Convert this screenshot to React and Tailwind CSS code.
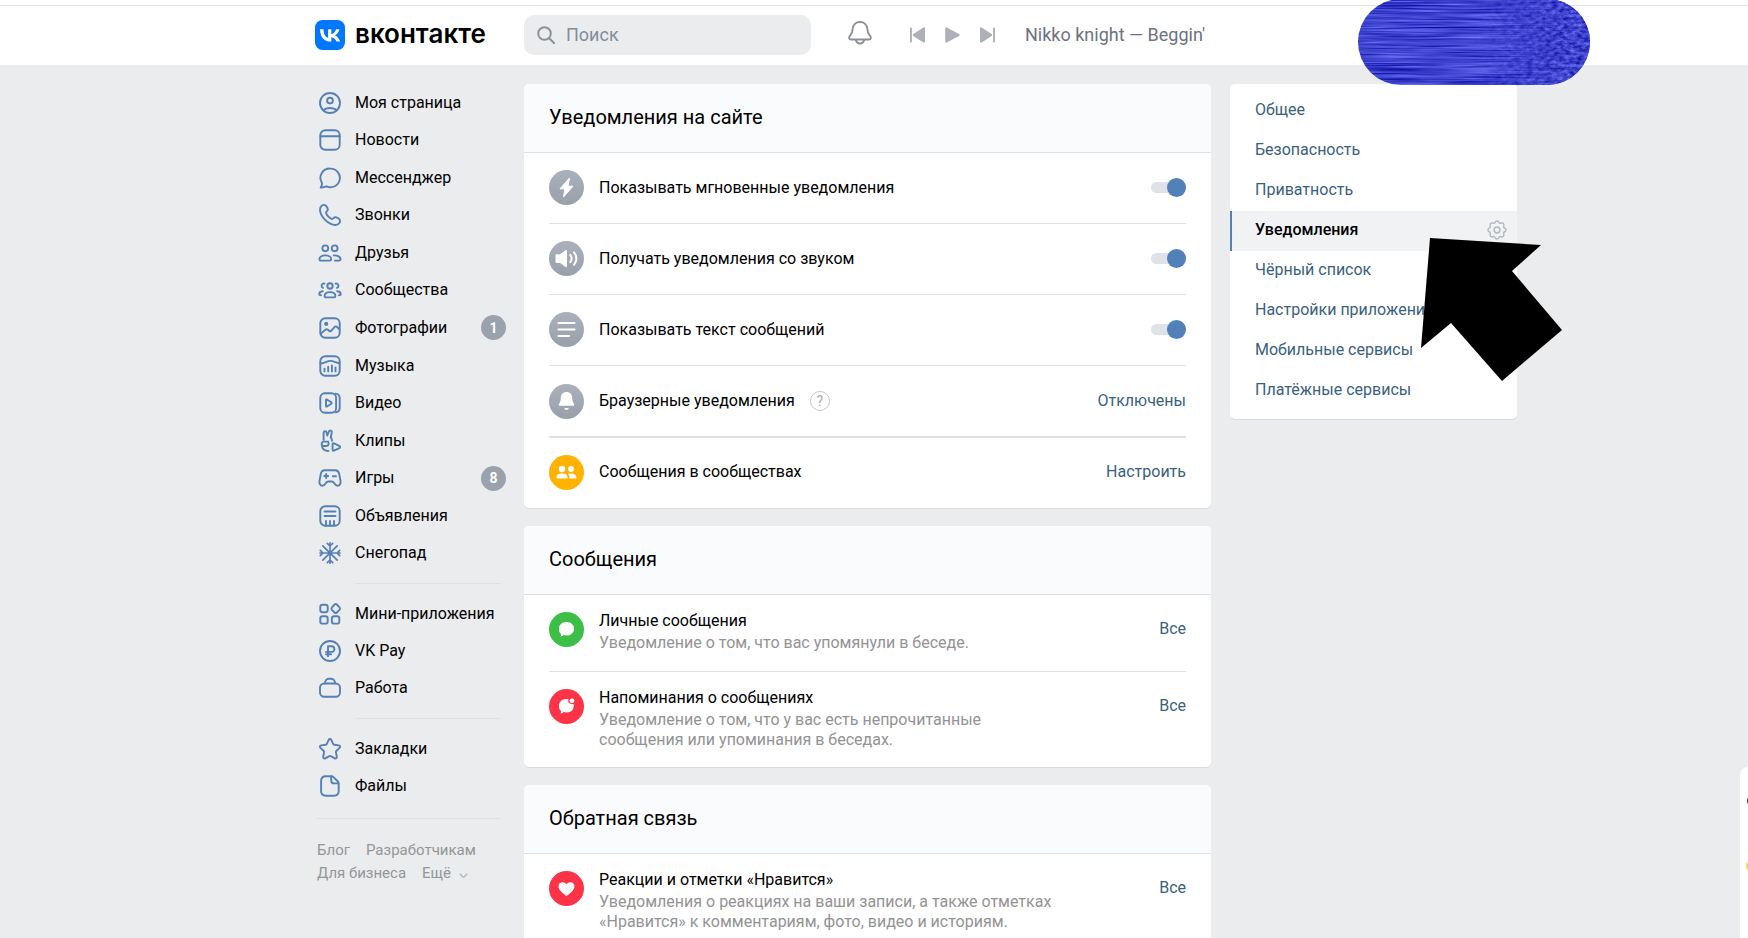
import { useState } from 'react';

const icons = {
  profile: (
    <>
      <circle cx="12" cy="12" r="10" />
      <circle cx="12" cy="9.6" r="2.9" />
      <path d="M5.5 19.4c1.4-1.6 3.7-2.4 6.5-2.4s5.1.8 6.5 2.4" />
    </>
  ),
  news: (
    <>
      <rect x="2.3" y="2.3" width="19.4" height="19.4" rx="5" />
      <path d="M2.5 8.3h19" />
    </>
  ),
  messenger: (
    <path d="M12.5 2.6a9.3 9.3 0 1 1-3.9 17.7c-1.7 1-3.7 1.3-6 1.2 1.2-1.4 1.7-3 1.2-4.8A9.3 9.3 0 0 1 12.5 2.6Z" />
  ),
  calls: (
    <path d="M7 2.1C5 1.3 2 3.2 2 6.6 2 13.6 10.5 22 17.5 22c3.2 0 5.3-3 4.3-5.1-.6-1.2-3-2.7-4.5-2.7-1.6 0-1.9 1.8-3.2 1.8C12.3 16 8 11.7 8 9.8c0-1.3 1.8-1.6 1.8-3.2C9.8 5.1 8.4 2.6 7 2.1Z" />
  ),
  friends: (
    <>
      <circle cx="7.3" cy="7.3" r="2.9" />
      <circle cx="16.7" cy="7.3" r="2.9" />
      <path d="M1.4 18.1c0-2.1 2.4-3.7 5.9-3.7s5.9 1.6 5.9 3.7c0 1-.6 1.5-1.6 1.5H3c-1 0-1.6-.5-1.6-1.5Z" />
      <path d="M15.7 14.4c3.9-.2 6.9 1.4 6.9 3.7 0 1-.6 1.5-1.6 1.5h-4.2" />
    </>
  ),
  groups: (
    <>
      <circle cx="12" cy="8" r="2.7" />
      <path d="M6.6 18c0-2.3 2.2-3.9 5.4-3.9s5.4 1.6 5.4 3.9c0 .9-.5 1.4-1.4 1.4H8c-.9 0-1.4-.5-1.4-1.4Z" />
      <path d="M6.5 5.6c-1.5-.4-3 .6-3 2.2 0 1 .5 1.8 1.5 2.1M17.5 5.6c1.5-.4 3 .6 3 2.2 0 1-.5 1.8-1.5 2.1M4.8 13.2c-2.2.2-3.5 1.3-3.5 2.7 0 .8.4 1.3 1.7 1.3M19.2 13.2c2.2.2 3.5 1.3 3.5 2.7 0 .8-.4 1.3-1.7 1.3" />
    </>
  ),
  photos: (
    <>
      <rect x="2.3" y="2.3" width="19.4" height="19.4" rx="5" />
      <path d="m2.8 17.6 4.6-3.9c.9-.7 1.7-.7 2.5 0l1.5 1.3c.6.5 1.2.4 1.7-.2l3.4-3.7c.8-.9 1.8-.9 2.6-.1l2.3 2.2" />
      <circle cx="8.2" cy="7.9" r="1.1" fill="currentColor" />
    </>
  ),
  music: (
    <>
      <rect x="2.3" y="2.3" width="19.4" height="19.4" rx="5" />
      <path d="M2.5 9.5c4 .3 6.2-2.6 10-2.6 3.4 0 5.2 1.8 9 2.4M6.5 14.8v2.6M10.2 12.8v4.6M13.9 11.4v6M17.5 13.4v4" />
    </>
  ),
  video: (
    <>
      <rect x="2.3" y="2.3" width="15.8" height="19.4" rx="4.5" />
      <path d="M8 9v6c0 .6.5.8 1 .5l4.3-2.8c.5-.4.5-1 0-1.4L9 8.5c-.5-.3-1-.1-1 .5ZM17.6 2.6c2.5.3 4.1 1.9 4.1 4.4v10c0 2.5-1.6 4.1-4.1 4.4" />
    </>
  ),
  clips: (
    <>
      <path d="M5.6 10.8V3.900c0-2 2.700-2.300 3-.4l.6 3.100 1.700-4c.8-1.800 3.400-1 2.900.9l-1.100 5M13.200 8.500l.8 3.200M10 12.600H6.100c-3 0-3.300 4.200-.5 4.400h2.700c2.200 0 3-2.400 1.700-4.400M4 17.300c.6 3 2.800 4.700 6.400 4.700" />
      <path d="M14.6 15.2v5.6c0 .8.7 1.1 1.3.8l5.5-2.4c.9-.4 1-1.6.2-2.1l-5.5-2.8c-.8-.4-1.5.1-1.500.900Z" />
    </>
  ),
  games: (
    <>
      <path d="M6.8 4.3h10.4c2.3 0 3.5 1.4 4 3.6l1.3 6.8c.5 3-.8 5-2.8 5-1.6 0-2.6-1-3.6-2.7-.7-1.1-1.4-1.5-2.5-1.5h-3.2c-1.1 0-1.8.4-2.5 1.5-1 1.7-2 2.7-3.6 2.7-2 0-3.3-2-2.8-5l1.3-6.8c.5-2.2 1.7-3.6 4-3.6Z" />
      <path d="M6.2 10h4M8.2 8v4M14.8 10.2h3.2" />
    </>
  ),
  ads: (
    <>
      <rect x="2.3" y="2.3" width="19.4" height="19.4" rx="5" />
      <path d="M6.500 7.500h11M6.500 12h11M8 17v4.500M12 17v4.500M16 17v4.500" />
    </>
  ),
  snow: (
    <path
      strokeWidth="1.7"
      d="M12 1.800v20.400M2 12h20M4.800 4.800l14.400 14.400M19.200 4.800 4.800 19.200M9.300 2.300 12 5l2.700-2.700M9.300 21.700 12 19l2.700 2.700M2.300 9.300 5 12l-2.700 2.700M21.700 9.300 19 12l2.700 2.700"
    />
  ),
  apps: (
    <>
      <rect x="2.3" y="2.8" width="7.4" height="7.4" rx="2.2" />
      <rect x="2.3" y="14.2" width="7.4" height="7.4" rx="2.2" />
      <rect x="13.9" y="14.2" width="7.4" height="7.4" rx="2.2" />
      <path d="m16.6 2.5-2.7 2.8c-.7.8-.7 1.7 0 2.5l2.7 2.7c.7.7 1.5.7 2.2 0l2.7-2.7c.7-.8.7-1.7 0-2.5l-2.7-2.8c-.7-.7-1.5-.7-2.2 0Z" />
    </>
  ),
  pay: (
    <>
      <circle cx="12" cy="12" r="10" />
      <path d="M10 17.2V7.3h3.5c3.8 0 3.8 5.6 0 5.6H8M8 15.3h5.2" />
    </>
  ),
  work: (
    <>
      <rect x="2" y="7.5" width="20" height="13.3" rx="4.2" />
      <path d="M7 7.3c0-2.5 1.6-4.6 3.6-4.6h2.8c2 0 3.6 2.1 3.6 4.6" />
    </>
  ),
  bookmarks: (
    <path d="M10.7 2.9c.6-1.2 2-1.2 2.6 0l2 4.2c.2.4.5.6.9.7l4.6.6c1.4.2 1.8 1.6.8 2.5l-3.3 3.1c-.3.3-.4.7-.4 1.1l.9 4.7c.2 1.3-.9 2.1-2.1 1.5l-4-2.2c-.5-.3-.9-.3-1.4 0l-4 2.2c-1.2.6-2.3-.2-2.1-1.5l.9-4.7c0-.4-.1-.8-.4-1.1l-3.3-3.1c-1-.9-.6-2.3.8-2.5l4.6-.6c.4-.1.7-.3.9-.7l2-4.2Z" />
  ),
  files: (
    <>
      <path d="M7.8 2.3h5.7c.8 0 1.4.2 2 .8l4.4 4.4c.5.5.8 1.2.8 1.9V17c0 3-1.7 4.7-4.7 4.7H7.8c-3 0-4.7-1.7-4.7-4.7V7c0-3 1.7-4.7 4.7-4.7Z" />
      <path d="M13.2 2.6v3.8c0 2 .9 3 3 3h4.2" />
    </>
  ),
};

const menuGroups = [
  {
    height: 'h-[488px]',
    items: [
      { icon: 'profile', label: 'Моя страница' },
      { icon: 'news', label: 'Новости' },
      { icon: 'messenger', label: 'Мессенджер' },
      { icon: 'calls', label: 'Звонки' },
      { icon: 'friends', label: 'Друзья' },
      { icon: 'groups', label: 'Сообщества' },
      { icon: 'photos', label: 'Фотографии', count: 1 },
      { icon: 'music', label: 'Музыка' },
      { icon: 'video', label: 'Видео' },
      { icon: 'clips', label: 'Клипы' },
      { icon: 'games', label: 'Игры', count: 8 },
      { icon: 'ads', label: 'Объявления' },
      { icon: 'snow', label: 'Снегопад' },
    ],
  },
  {
    height: 'h-[112px]',
    items: [
      { icon: 'apps', label: 'Мини-приложения' },
      { icon: 'pay', label: 'VK Pay' },
      { icon: 'work', label: 'Работа' },
    ],
  },
  {
    height: 'h-[75px]',
    items: [
      { icon: 'bookmarks', label: 'Закладки' },
      { icon: 'files', label: 'Файлы' },
    ],
  },
];

const settingsTabs = [
  'Общее',
  'Безопасность',
  'Приватность',
  'Уведомления',
  'Чёрный список',
  'Настройки приложений',
  'Мобильные сервисы',
  'Платёжные сервисы',
];

const gray = 'bg-linear-to-b from-[#aab1bc] to-[#99a0ac]';

const glyphs = {
  bolt: <path d="M20.5 8 11 18.8h5L14.5 27 24 16.2h-5L20.5 8Z" strokeLinejoin="round" stroke="white" />,
  sound: (
    <>
      <path d="M6.5 14.5c0-.8.4-1.2 1.2-1.2H11l5.5-4c.7-.5 1.5-.2 1.5.8v15c0 1-.8 1.3-1.5.8l-5.5-4H7.7c-.8 0-1.2-.4-1.2-1.2v-6.200Z" />
      <path d="M21.3 14c1.6 2.2 1.6 5 0 7.2M25 11.3c2.9 3.8 2.9 8.7 0 12.5" fill="none" stroke="white" strokeWidth="2" strokeLinecap="round" />
    </>
  ),
  text: <path d="M9.5 11h16M9.5 17.5h16M9.5 24h10.5" fill="none" stroke="white" strokeWidth="2.2" strokeLinecap="round" />,
  bell: (
    <>
      <path d="M17.5 8c-3.7 0-5.5 2.6-5.7 5.7-.2 3-.4 4-1.5 5.5-1 1.4-.7 2.6.9 2.6h12.6c1.6 0 1.9-1.2.9-2.6-1.1-1.5-1.3-2.5-1.5-5.5C23 10.6 21.2 8 17.5 8Z" />
      <path d="M15.3 24h4.4c0 2.6-4.4 2.6-4.4 0Z" />
    </>
  ),
  people: (
    <>
      <circle cx="13" cy="14" r="3.2" />
      <circle cx="22" cy="14" r="2.9" />
      <path d="M7.5 22.4c0-2.5 2.3-4 5.5-4s5.5 1.5 5.5 4c0 .8-.4 1.2-1.1 1.2H8.6c-.7 0-1.1-.4-1.1-1.2ZM20.3 23.6c.5-2.1-.1-3.6-1.4-4.7 3.7-1.3 8.6.1 8.6 3.5 0 .8-.4 1.2-1.1 1.2h-6.1Z" />
    </>
  ),
  chat: <path d="M17.5 10c4.5 0 7.6 2.9 7.6 6.7s-3.1 6.8-7.6 6.8c-1 0-1.8-.1-2.6-.4-.9.9-2 1.4-3.4 1.5.5-.9.6-1.8.4-2.8a6.6 6.6 0 0 1-2-5.1c0-3.8 3.1-6.700 7.600-6.700Z" />,
  unread: (
    <>
      <path d="M17.5 10c.9 0 1.5.1 2 .3-1 2.8 1.1 5.4 4.9 4.8.3.5.4 1.1.4 1.8 0 3.7-3.1 6.6-7.3 6.6-1 0-1.8-.1-2.6-.4-.9.9-2 1.4-3.4 1.5.5-.9.6-1.8.4-2.8a6.6 6.6 0 0 1-2-5.1c0-3.8 3.1-6.700 7.600-6.700Z" />
      <circle cx="23" cy="11.8" r="2.4" />
    </>
  ),
  heart: <path d="M17.5 13.3c1.9-3.3 8-2.5 8 1.9 0 3.6-3.6 6.2-6.4 8.7-1.2 1-2 1-3.2 0-2.8-2.5-6.4-5.1-6.4-8.7 0-4.4 6.1-5.2 8-1.9Z" />,
};

function Round({ glyph, color }) {
  return (
    <span className={`block size-[35px] shrink-0 rounded-full ${color}`}>
      <svg viewBox="0 0 35 35" className="size-full" fill="white">{glyphs[glyph]}</svg>
    </span>
  );
}

function Card({ title, children }) {
  return (
    <section className="overflow-hidden rounded-[5px] bg-white shadow-[0_1px_0_0_#d9dce0]">
      <h2 className="flex h-[69px] items-center border-b border-[#dce1e6] bg-[#fafbfd] px-[25px] pb-0.5 text-xl">{title}</h2>
      <div className="px-[25px]">{children}</div>
    </section>
  );
}

function ToggleRow({ glyph, label }) {
  const [on, setOn] = useState(true);
  return (
    <label className="flex h-[71px] cursor-pointer items-center border-b border-[#dce1e6] pb-px">
      <Round glyph={glyph} color={gray} />
      <span className="ml-[15px] flex-1">{label}</span>
      <input
        type="checkbox"
        checked={on}
        onChange={(e) => setOn(e.target.checked)}
        className="relative h-[19px] w-[35px] cursor-pointer appearance-none before:absolute before:inset-x-0 before:top-1 before:h-[11px] before:rounded-full before:bg-[#dfe2e6] after:absolute after:top-0 after:left-0 after:size-[19px] after:rounded-full after:bg-[#a9b0ba] checked:after:left-4 checked:after:bg-[#5181b8]"
      />
    </label>
  );
}

function DetailRow({ glyph, color, title, text }) {
  return (
    <div className="flex border-b border-[#dce1e6] pt-[14px] pb-[18px] last:border-b-0 last:pb-[17px]">
      <div className="mt-[3px]">
        <Round glyph={glyph} color={color} />
      </div>
      <div className="ml-[15px] flex-1">
        <h3 className="leading-6">{title}</h3>
        <p className="max-w-[462px] leading-5 text-[#939393]">{text}</p>
      </div>
      <button type="button" className="mt-2 h-6 leading-6 text-[#3a5f80]">Все</button>
    </div>
  );
}

function Sidebar() {
  return (
    <nav className="w-[210px] shrink-0 pr-4">
      {menuGroups.map((group, i) => (
        <div key={i}>
          <ul className={`grid auto-rows-fr ${group.height}`}>
            {group.items.map((item) => (
              <li key={item.icon} className="flex">
                <a href="#" className="flex flex-1 items-center pl-1">
                  <svg
                    viewBox="0 0 24 24"
                    className="size-6 text-[#5580b5]"
                    fill="none"
                    stroke="currentColor"
                    strokeWidth="1.9"
                    strokeLinecap="round"
                    strokeLinejoin="round"
                  >
                    {icons[item.icon]}
                  </svg>
                  <span className="ml-[13px] whitespace-nowrap">{item.label}</span>
                </a>
                {item.count && (
                  <span className="mr-[2px] flex size-[25px] shrink-0 items-center justify-center self-center rounded-full bg-[#99a2ad] text-sm font-bold text-white">
                    {item.count}
                  </span>
                )}
              </li>
            ))}
          </ul>
          {i < 2 && <hr className="my-[11px] mr-[7px] ml-[41px] border-[#dfe1e4]" />}
        </div>
      ))}
      <hr className="mt-[13px] mr-[7px] ml-[2px] border-[#dfe1e4]" />
      <div className="mt-5 ml-[3px] flex flex-wrap gap-x-4 text-[15px] leading-[23px] text-[#939699]">
        <a href="#">Блог</a>
        <a href="#">Разработчикам</a>
        <a href="#">Для бизнеса</a>
        <button type="button" className="flex items-center gap-2">
          Ещё
          <svg viewBox="0 0 10 6" className="mt-1 w-[9px]" fill="none" stroke="#b8bdc4" strokeWidth="1.8">
            <path d="m1 1 4 4 4-4" />
          </svg>
        </button>
      </div>
    </nav>
  );
}

function Header() {
  return (
    <header className="h-[65px] bg-white pt-[5px] pl-[83px]">
      <div className="-ml-[83px] border-t border-[#e3e4e6]" />
      <div className="relative mx-auto flex h-[59px] max-w-[1203px] items-center pb-0.5">
        <a href="#" className="flex w-[210px] shrink-0 items-center gap-[10px] pl-px">
          <svg viewBox="0 0 24 24" className="size-[30px]">
            <rect width="24" height="24" rx="6" fill="#0077ff" />
            <path fill="white" d="M6.79 7.3H4.05c.13 6.24 3.25 9.99 8.72 9.99h.31v-3.57c2.01.2 3.53 1.67 4.14 3.57h2.84c-.78-2.84-2.83-4.41-4.11-5.01 1.28-.74 3.08-2.54 3.51-4.98h-2.58c-.56 1.98-2.22 3.78-3.8 3.95V7.3H10.5v6.92c-1.6-.4-3.62-2.34-3.71-6.92Z" />
          </svg>
          <span className="pb-0.5 font-['Inter',sans-serif] text-[26px] leading-8 font-semibold">вконтакте</span>
        </a>
        <label className="flex h-10 w-[287px] shrink-0 items-center rounded-[10px] bg-[#ebecee] pl-[13px]">
          <svg viewBox="0 0 18 18" className="size-[18px]" fill="none" stroke="#8b929b" strokeWidth="2" strokeLinecap="round">
            <circle cx="7.5" cy="7.5" r="6.3" />
            <path d="m12.2 12.2 5 5" />
          </svg>
          <input
            type="search"
            placeholder="Поиск"
            aria-label="Поиск"
            className="ml-[11px] w-52 bg-transparent text-lg outline-none placeholder:text-[#818c99]"
          />
        </label>
        <button type="button" aria-label="Уведомления" className="ml-9 pb-1">
          <svg viewBox="0 0 26 26" className="size-[26px]" fill="none" stroke="#8b9095" strokeWidth="1.9" strokeLinejoin="round">
            <path d="M13 2c-4.2 0-7 2.8-7.3 6.7-.2 3.1-.5 4.7-2.3 6.5-1.9 1.9-1.7 4.3.8 4.3h17.6c2.5 0 2.7-2.4.8-4.3-1.8-1.8-2.1-3.4-2.3-6.5C20 4.800 17.200 2 13 2Z" />
            <path d="M8.8 19.5c.5 2.7 2 4 4.2 4s3.7-1.3 4.2-4" />
          </svg>
        </button>
        <div className="ml-[37px] flex gap-5">
          <button type="button" aria-label="Предыдущий">
            <svg viewBox="0 0 15 16" className="h-4 w-[15px]" fill="#acb1b9">
              <path d="M0 1.3c0-1.1 1.9-1.1 1.9 0v13.4c0 1.1-1.9 1.1-1.9 0V1.3ZM13.4.5c.8-.5 1.6-.1 1.6.9v13.2c0 1-.8 1.4-1.6.9L3.3 8.9c-.7-.5-.7-1.3 0-1.8L13.4.5Z" />
            </svg>
          </button>
          <button type="button" aria-label="Играть">
            <svg viewBox="0 0 15 16" className="h-4 w-[15px]" fill="#acb1b9">
              <path d="M1.8.5C.9 0 .2.4.2 1.4v13.2c0 1 .7 1.4 1.6.9L14 8.9c.8-.5.8-1.3 0-1.8L1.8.5Z" />
            </svg>
          </button>
          <button type="button" aria-label="Следующий">
            <svg viewBox="0 0 15 16" className="h-4 w-[15px] rotate-180" fill="#acb1b9">
              <path d="M0 1.3c0-1.1 1.9-1.1 1.9 0v13.4c0 1.1-1.9 1.1-1.9 0V1.3ZM13.4.5c.8-.5 1.6-.1 1.6.9v13.2c0 1-.8 1.4-1.6.9L3.3 8.9c-.7-.5-.7-1.3 0-1.8L13.4.5Z" />
            </svg>
          </button>
        </div>
        <span className="ml-[30px] text-lg whitespace-nowrap text-[#6b737d]">Nikko knight — Beggin'</span>

        {/* закрашенный профиль */}
        <svg viewBox="0 0 232 86" className="absolute -top-[7px] -right-[73px] z-10 h-[86px] w-[232px]">
          <defs>
            <clipPath id="pill">
              <rect width="232" height="86" rx="43" />
            </clipPath>
            <filter id="strokes" x="0" y="0" width="100%" height="100%" colorInterpolationFilters="sRGB">
              <feTurbulence type="fractalNoise" baseFrequency="0.012 0.6" numOctaves="3" seed="4" />
              <feColorMatrix values="0.6 0 0 0 -0.06  0.6 0 0 0 -0.04  0.5 0 0 0 0.56  0 0 0 0 1" />
            </filter>
            <filter id="bumps" x="0" y="0" width="100%" height="100%" colorInterpolationFilters="sRGB">
              <feTurbulence type="fractalNoise" baseFrequency="0.16 0.32" numOctaves="3" seed="9" />
              <feColorMatrix values="0.6 0 0 0 -0.06  0.6 0 0 0 -0.04  0.5 0 0 0 0.55  0 0 0 0 1" />
            </filter>
            <linearGradient id="fade">
              <stop offset="0.5" stopColor="black" />
              <stop offset="0.9" stopColor="white" />
            </linearGradient>
            <mask id="right">
              <rect width="232" height="86" fill="url(#fade)" />
            </mask>
          </defs>
          <g clipPath="url(#pill)">
            <rect width="232" height="86" filter="url(#strokes)" />
            <g mask="url(#right)">
              <rect width="232" height="86" filter="url(#bumps)" />
            </g>
          </g>
        </svg>
      </div>
    </header>
  );
}

function SettingsMenu() {
  const [active, setActive] = useState('Уведомления');
  return (
    <aside className="relative ml-[19px] w-[287px] shrink-0 self-start rounded-[5px] bg-white pt-[7px] pb-2 shadow-[0_1px_0_0_#d9dce0]">
      {settingsTabs.map((tab) => (
        <a
          key={tab}
          href="#"
          onClick={() => setActive(tab)}
          className={
            tab === active
              ? 'flex h-10 items-center justify-between border-l-2 border-[#5181b8] bg-[#f0f2f4] pr-[10px] pb-0.5 pl-[23px] font-medium'
              : 'flex h-10 items-center border-l-2 border-transparent pb-0.5 pl-[23px] text-[#3a5f80]'
          }
        >
          {tab}
          {tab === active && (
            <svg viewBox="0 0 20 20" className="size-5" fill="none" stroke="#b5b9bf" strokeWidth="1.5" strokeLinejoin="round">
              <path d="M8.2 2.2c.7-1.6 2.9-1.6 3.6 0 .4.9 1.4 1.3 2.3.9 1.7-.6 3.3 1 2.7 2.7-.4.9.1 1.9 1 2.3 1.6.7 1.6 3 0 3.7-.9.4-1.4 1.4-1 2.3.6 1.7-1 3.3-2.7 2.7-.9-.4-1.9 0-2.3.9-.7 1.6-2.9 1.6-3.6 0-.4-.9-1.4-1.3-2.3-.9-1.7.6-3.3-1-2.7-2.7.4-.9-.1-1.9-1-2.3-1.6-.7-1.6-3 0-3.7.9-.4 1.4-1.4 1-2.3-.6-1.700 1-3.300 2.700-2.700.9.400 1.900 0 2.300-.9Z" />
              <circle cx="10" cy="10" r="2.9" />
            </svg>
          )}
        </a>
      ))}
      <svg viewBox="0 0 142 144" className="absolute top-[154px] left-[191px] h-36 w-[142px]">
        <path d="M9 0 120 7 91 33 141 92 81 143 30 85 0 110Z" />
      </svg>
    </aside>
  );
}

export default function App() {
  return (
    <div className="relative h-screen overflow-hidden bg-[#ebecee] font-['Roboto',sans-serif] text-base text-black">
      <Header />
      <div className="pt-[19px] pl-[83px]">
        <div className="mx-auto flex max-w-[1203px]">
          <Sidebar />
          <main className="flex min-w-0 flex-1 flex-col gap-[18px]">
            <Card title="Уведомления на сайте">
              <ToggleRow glyph="bolt" label="Показывать мгновенные уведомления" />
              <ToggleRow glyph="sound" label="Получать уведомления со звуком" />
              <ToggleRow glyph="text" label="Показывать текст сообщений" />
              <div className="flex h-[72px] items-center border-b-2 border-[#dce1e6]">
                <Round glyph="bell" color={gray} />
                <span className="ml-[15px]">Браузерные уведомления</span>
                <button type="button" className="ml-[15px] flex size-5 items-center justify-center rounded-full border border-[#c4c8cc] text-sm text-[#a5a9ae]">
                  ?
                </button>
                <button type="button" className="ml-auto text-[#3a5f80]">Отключены</button>
              </div>
              <div className="flex h-[70px] items-center pb-0.5">
                <Round glyph="people" color="bg-[#ffb300]" />
                <span className="ml-[15px]">Сообщения в сообществах</span>
                <button type="button" className="ml-auto text-[#3a5f80]">Настроить</button>
              </div>
            </Card>
            <Card title="Сообщения">
              <DetailRow glyph="chat" color="bg-[#3bbf46]" title="Личные сообщения" text="Уведомление о том, что вас упомянули в беседе." />
              <DetailRow glyph="unread" color="bg-[#ff3347]" title="Напоминания о сообщениях" text="Уведомление о том, что у вас есть непрочитанные сообщения или упоминания в беседах." />
            </Card>
            <Card title="Обратная связь">
              <DetailRow glyph="heart" color="bg-[#ff3347]" title="Реакции и отметки «Нравится»" text="Уведомления о реакциях на ваши записи, а также отметках «Нравится» к комментариям, фото, видео и историям." />
            </Card>
          </main>
          <SettingsMenu />
        </div>
      </div>

      {/* край панели чатов */}
      <div className="absolute right-0 bottom-0 h-[171px] w-2 overflow-hidden rounded-tl-lg bg-white">
        <div className="mt-7 ml-[7px] size-3 rounded-full bg-[#333]" />
        <div className="mt-[53px] ml-[6px] size-3 rounded-full bg-[#e3dc4a]" />
      </div>
    </div>
  );
}
